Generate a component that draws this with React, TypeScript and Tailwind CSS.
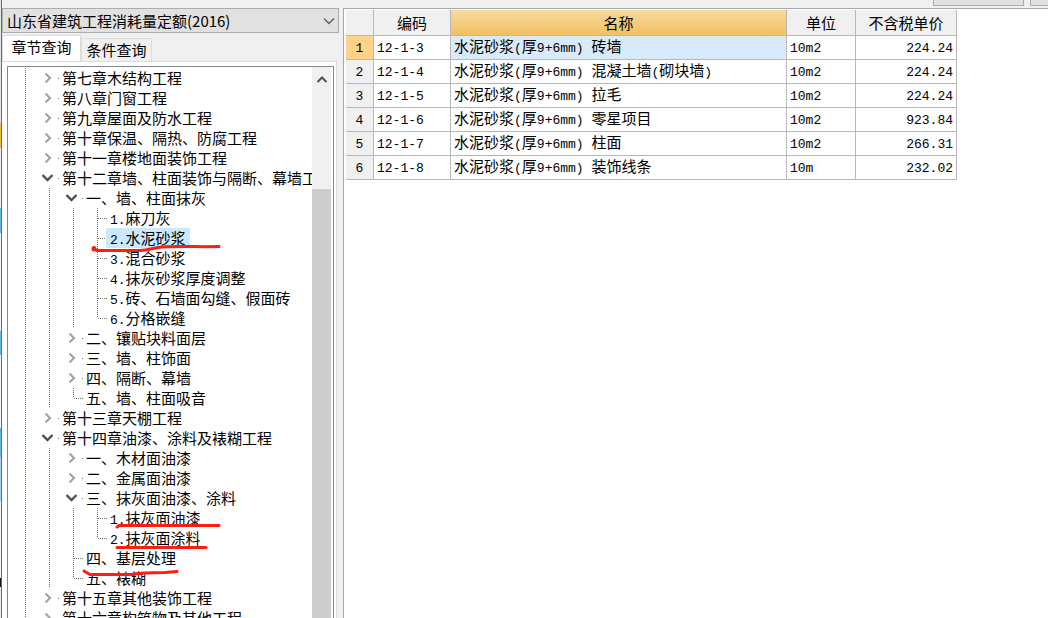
import clsx from "clsx";
import { useState } from "react";

type Guide = "line" | "tee" | "end" | "open" | "closed";

type TreeRow = {
  label: string;
  guides: Guide[];
};

const tree: TreeRow[] = [
  { label: "第七章木结构工程", guides: ["line", "closed"] },
  { label: "第八章门窗工程", guides: ["line", "closed"] },
  { label: "第九章屋面及防水工程", guides: ["line", "closed"] },
  { label: "第十章保温、隔热、防腐工程", guides: ["line", "closed"] },
  { label: "第十一章楼地面装饰工程", guides: ["line", "closed"] },
  { label: "第十二章墙、柱面装饰与隔断、幕墙工程", guides: ["line", "open"] },
  { label: "一、墙、柱面抹灰", guides: ["line", "line", "open"] },
  { label: "1.麻刀灰", guides: ["line", "line", "line", "tee"] },
  { label: "2.水泥砂浆", guides: ["line", "line", "line", "tee"] },
  { label: "3.混合砂浆", guides: ["line", "line", "line", "tee"] },
  { label: "4.抹灰砂浆厚度调整", guides: ["line", "line", "line", "tee"] },
  { label: "5.砖、石墙面勾缝、假面砖", guides: ["line", "line", "line", "tee"] },
  { label: "6.分格嵌缝", guides: ["line", "line", "line", "end"] },
  { label: "二、镶贴块料面层", guides: ["line", "line", "closed"] },
  { label: "三、墙、柱饰面", guides: ["line", "line", "closed"] },
  { label: "四、隔断、幕墙", guides: ["line", "line", "closed"] },
  { label: "五、墙、柱面吸音", guides: ["line", "line", "end"] },
  { label: "第十三章天棚工程", guides: ["line", "closed"] },
  { label: "第十四章油漆、涂料及裱糊工程", guides: ["line", "open"] },
  { label: "一、木材面油漆", guides: ["line", "line", "closed"] },
  { label: "二、金属面油漆", guides: ["line", "line", "closed"] },
  { label: "三、抹灰面油漆、涂料", guides: ["line", "line", "open"] },
  { label: "1.抹灰面油漆", guides: ["line", "line", "line", "tee"] },
  { label: "2.抹灰面涂料", guides: ["line", "line", "line", "end"] },
  { label: "四、基层处理", guides: ["line", "line", "tee"] },
  { label: "五、裱糊", guides: ["line", "line", "end"] },
  { label: "第十五章其他装饰工程", guides: ["line", "closed"] },
  { label: "第十六章构筑物及其他工程", guides: ["line", "closed"] },
];

const quotas = [
  { code: "12-1-3", name: "水泥砂浆(厚9+6mm) 砖墙", unit: "10m2", price: "224.24" },
  { code: "12-1-4", name: "水泥砂浆(厚9+6mm) 混凝土墙(砌块墙)", unit: "10m2", price: "224.24" },
  { code: "12-1-5", name: "水泥砂浆(厚9+6mm) 拉毛", unit: "10m2", price: "224.24" },
  { code: "12-1-6", name: "水泥砂浆(厚9+6mm) 零星项目", unit: "10m2", price: "923.84" },
  { code: "12-1-7", name: "水泥砂浆(厚9+6mm) 柱面", unit: "10m2", price: "266.31" },
  { code: "12-1-8", name: "水泥砂浆(厚9+6mm) 装饰线条", unit: "10m", price: "232.02" },
];

// Slice of the window that sits behind the left border
const backdrop = [
  "h-[123px] bg-[#e4e4e4]",
  "h-[25px] bg-[#f5b942]",
  "h-[60px] bg-[#eeeeee]",
  "h-[25px] bg-[#63b5ee]",
  "h-[98px] bg-[#f4f4f4]",
  "h-[24px] bg-[#63b5ee]",
  "h-[73px] bg-[#f4f4f4]",
  "h-[29px] bg-[#63b5ee]",
  "h-[44px] bg-[#a9d3f2]",
  "h-[77px] bg-[#f4f4f4]",
  "h-[9px] bg-[#111111]",
  "flex-1 bg-[#e6eef6]",
];

// Half-width runs are set in a monospaced face next to the 15px hanzi
function Mixed({ text }: { text: string }) {
  return (
    <>
      {text.split(/([\x20-\x7e]+)/).map((part, i) =>
        i % 2 ? (
          <span
            key={i}
            className="whitespace-pre font-['Liberation_Mono','Noto_Sans_CJK_SC',monospace] text-[13px]"
          >
            {part}
          </span>
        ) : (
          part
        ),
      )}
    </>
  );
}

function GuideCell({ kind }: { kind: Guide }) {
  const dots = { stroke: "#707070", strokeDasharray: "1 1" };
  return (
    <svg className="h-5 w-6 shrink-0 overflow-visible" viewBox="0 0 24 20" fill="none">
      {(kind === "line" || kind === "tee") && <path d="M15.5 0V20" {...dots} />}
      {kind === "end" && <path d="M15.5 0V10" {...dots} />}
      {(kind === "tee" || kind === "end") && <path d="M16 10.5H26" {...dots} />}
      {kind === "closed" && (
        <path d="M11.500 5.500L16 10L11.500 14.500" stroke="#a6a6a6" strokeWidth="2.200" />
      )}
      {kind === "open" && (
        <path d="M8.500 7L13.500 12L18.500 7" stroke="#505050" strokeWidth="2.400" />
      )}
      {(kind === "closed" || kind === "open") && (
        <path d="M24 10.5H25" stroke="#707070" />
      )}
    </svg>
  );
}

function RedMarks() {
  return (
    <svg
      className="pointer-events-none absolute top-0 left-0 h-[560px] w-[320px]"
      viewBox="8 67 320 560"
      fill="none"
      stroke="#fb1e12"
      strokeWidth="3"
      strokeLinecap="round"
      strokeLinejoin="round"
    >
      <path d="M94 249L97 250.5H140C150 250 152 248 162 247C180 246 200 247 219 246.500" />
      <path d="M94 248.500V249" strokeWidth="5" />
      <path d="M117 527L119 525.500H219" />
      <path d="M117 547.500H206" />
      <path d="M84 571L90 574.500H133C140 572 150 573 165 572.500L177 571.500" />
    </svg>
  );
}

export default function App() {
  const [tab, setTab] = useState("章节查询");
  const [selected, setSelected] = useState(8);
  const [activeRow, setActiveRow] = useState(0);

  return (
    <div className="flex h-screen overflow-hidden bg-[#f0f0f0] font-['Noto_Sans_CJK_SC',sans-serif] text-[15px] leading-5 text-black">
      <div className="flex w-px shrink-0 flex-col">
        {backdrop.map((segment, i) => (
          <div key={i} className={segment} />
        ))}
      </div>
      <div className="w-px shrink-0 bg-[#1f7fd0]" />

      <aside className="flex w-[341px] shrink-0 flex-col pt-2">
        <div className="relative mr-1">
          <select
            aria-label="定额库"
            className="h-[25px] w-full appearance-none border border-[#adadad] bg-[#e1e1e1] pl-1 font-['Noto_Sans_CJK_SC',sans-serif] text-[15px] leading-5"
          >
            <option>山东省建筑工程消耗量定额(2016)</option>
          </select>
          <svg
            className="pointer-events-none absolute top-2 right-1 h-2.5 w-3"
            viewBox="0 0 12 10"
            fill="none"
            stroke="#606060"
            strokeWidth="1.4"
          >
            <path d="M1 2.500L6 7.500L11 2.500" />
          </svg>
        </div>

        <div role="tablist" className="flex items-end pt-0.5">
          {["章节查询", "条件查询"].map((name) => (
            <button
              key={name}
              role="tab"
              aria-selected={tab === name}
              onClick={() => setTab(name)}
              className={clsx(
                "border border-b-0 border-[#dcdcdc]",
                tab === name
                  ? "-mb-px h-[27px] w-[79px] bg-white pb-1"
                  : "h-[23px] w-[71px] bg-[#f0f0f0]",
              )}
            >
              {name}
            </button>
          ))}
        </div>

        <div className="-z-0 mr-1.5 flex min-h-0 flex-1 flex-col border-t border-r border-[#dcdcdc] bg-white pt-1 pr-0.5 pl-[5px]">
          <div className="flex min-h-0 flex-1 border border-b-0 border-[#828790]">
            <div className="relative min-w-0 flex-1 overflow-hidden pt-px pl-0.5">
              <ul role="tree">
                {tree.map((row, i) => (
                  <li key={i} role="treeitem" aria-selected={selected === i} className="flex h-5">
                    {row.guides.map((kind, j) => (
                      <GuideCell key={j} kind={kind} />
                    ))}
                    <button
                      onClick={() => setSelected(i)}
                      className={clsx(
                        "h-5 px-1 whitespace-nowrap",
                        selected === i && "bg-[#cce8ff]",
                      )}
                    >
                      <Mixed text={row.label} />
                    </button>
                  </li>
                ))}
              </ul>
              <RedMarks />
            </div>
            <div className="mr-0.5 flex w-[19px] shrink-0 flex-col bg-[#f0f0f0]">
              <button aria-label="向上滚动" className="flex h-[122px] items-start justify-center pt-2">
                <svg className="h-2.5 w-3" viewBox="0 0 12 10" fill="none" stroke="#505050" strokeWidth="2">
                  <path d="M1.500 7L6 2.500L10.500 7" />
                </svg>
              </button>
              <div className="flex-1 bg-[#cdcdcd]" />
            </div>
          </div>
        </div>
      </aside>

      <main className="flex min-w-0 flex-1 flex-col">
        <div className="flex h-2 items-start justify-end gap-1.5 overflow-hidden">
          <button aria-label="插入" className="h-1.5 w-[91px] border border-t-0 border-[#adadad] bg-[#e1e1e1]" />
          <button aria-label="替换" className="h-1.5 w-[18px] border border-t-0 border-r-0 border-[#adadad] bg-[#e1e1e1]" />
        </div>
        <div className="flex-1 border-t border-l border-[#a5a8b0] bg-white pt-px pl-0.5">
          <table className="table-fixed border-separate border-spacing-0">
            <colgroup>
              <col className="w-7" />
              <col className="w-[77px]" />
              <col className="w-[336px]" />
              <col className="w-[69px]" />
              <col className="w-[101px]" />
            </colgroup>
            <thead>
              <tr className="h-[26px]">
                {["", "编码", "名称", "单位", "不含税单价"].map((title) => (
                  <th
                    key={title}
                    className={clsx(
                      "border-r border-b border-[#b8b8b8] p-0 font-normal",
                      title === "名称"
                        ? "bg-linear-to-b from-[#f9d99f] to-[#f1c15f]"
                        : "bg-[#f0f0f0]",
                    )}
                  >
                    {title}
                  </th>
                ))}
              </tr>
            </thead>
            <tbody>
              {quotas.map((quota, i) => (
                <tr
                  key={quota.code}
                  onClick={() => setActiveRow(i)}
                  className="h-6 *:border-r *:border-b *:border-[#b8b8b8] *:py-0"
                >
                  <th
                    scope="row"
                    className={clsx(
                      "px-0 font-normal",
                      activeRow === i ? "bg-[#ffd48a]" : "bg-[#f0f0f0]",
                    )}
                  >
                    <Mixed text={String(i + 1)} />
                  </th>
                  <td className="px-[3px]">
                    <Mixed text={quota.code} />
                  </td>
                  <td className={clsx("px-[3px]", activeRow === i && "bg-[#d9eaf8]")}>
                    <Mixed text={quota.name} />
                  </td>
                  <td className="px-[3px]">
                    <Mixed text={quota.unit} />
                  </td>
                  <td className="px-[3px] text-right">
                    <Mixed text={quota.price} />
                  </td>
                </tr>
              ))}
            </tbody>
          </table>
        </div>
      </main>
    </div>
  );
}
